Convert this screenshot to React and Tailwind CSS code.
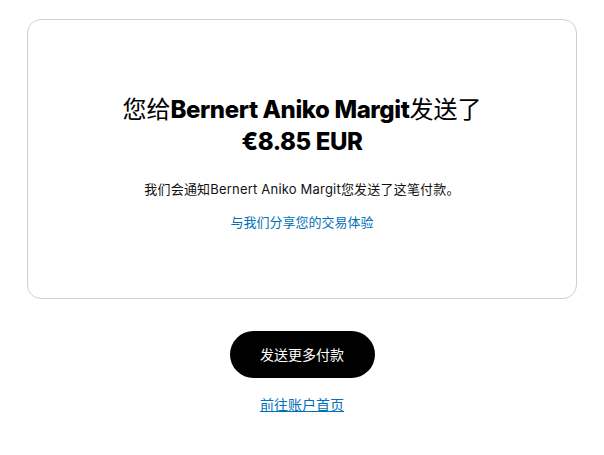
export default function App() {
  const cjk = { fontFamily: '"Inter", "Noto Sans CJK SC", sans-serif' };
  return (
    <div className="min-h-[455px] bg-white pt-[19px]" style={cjk}>
      <div className="mx-auto flex h-[280px] w-[550px] flex-col items-center rounded-[14px] border border-[#cfcfcf] pt-[74px] text-center">
        <h1 className="text-[24px] leading-[32px] text-black">
          <span className="font-normal">您给</span>
          <span className="font-extrabold tracking-[-0.4px]">Bernert Aniko Margit</span>
          <span className="font-normal">发送了</span>
          <br />
          <span className="font-extrabold tracking-[-0.4px]">€8.85 EUR</span>
        </h1>
        <p className="mt-[21px] text-[13px] leading-[20px] tracking-[0.2px] text-[#111]">
          我们会通知Bernert Aniko Margit您发送了这笔付款。
        </p>
        <a href="#" className="mt-[13px] text-[13px] leading-[20px] text-[#0070ba]">
          与我们分享您的交易体验
        </a>
      </div>
      <div className="mt-[32px] flex flex-col items-center">
        <button
          type="button"
          className="h-[47px] w-[145px] rounded-full bg-black text-[14px] text-white"
        >
          发送更多付款
        </button>
        <a href="#" className="mt-[17px] text-[14px] leading-[20px] text-[#0070ba] underline">
          前往账户首页
        </a>
      </div>
    </div>
  );
}
